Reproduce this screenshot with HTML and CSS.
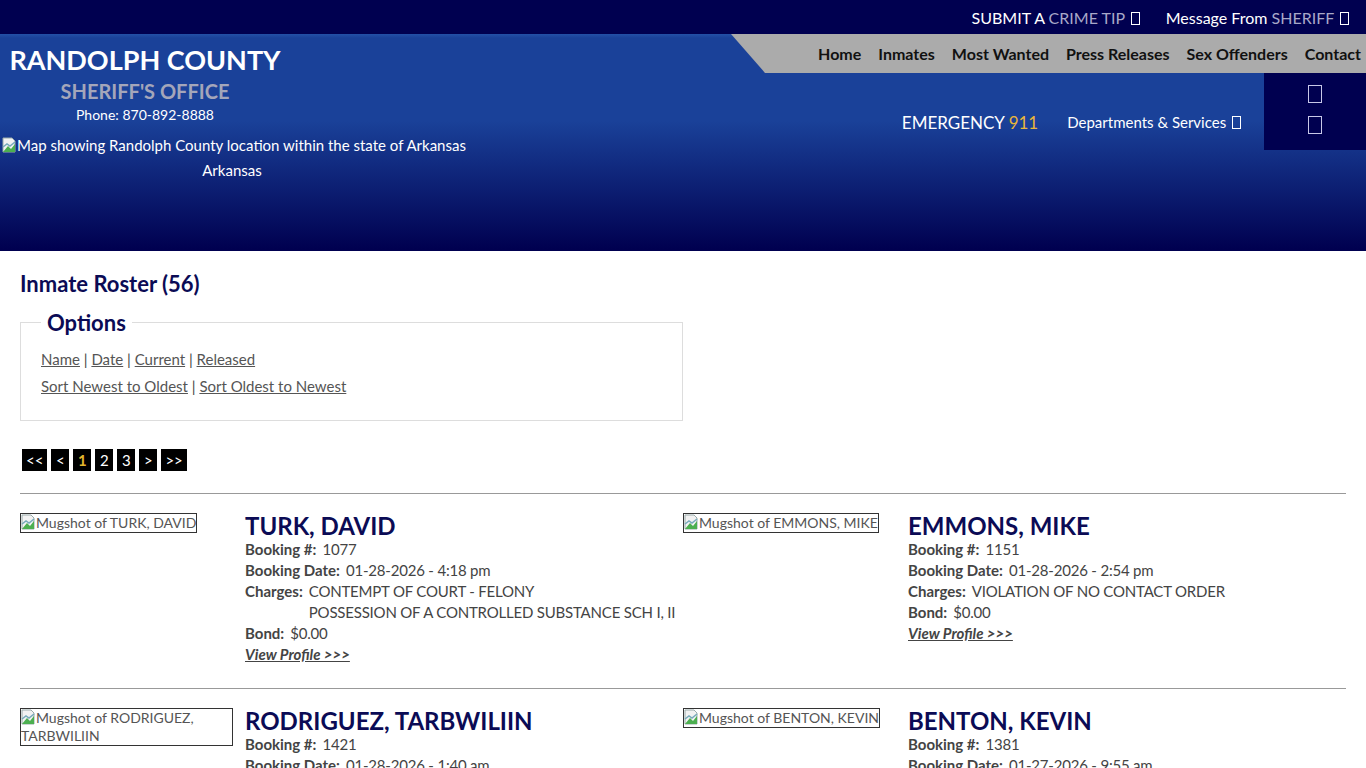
FILE: index.html
```html
<!DOCTYPE html>
<html lang="en">

<head>
    <meta charset="UTF-8" />
    <meta name="viewport" content="width=device-width, initial-scale=1.0" />
    <title>Inmate Roster - Randolph County Sheriff's Office</title>
    <link rel="stylesheet" href="styles.css">
</head>

<body>
    <header class="site-header">
        <div class="topbar">
            <a href="#">SUBMIT A <span class="dim">CRIME TIP</span> <i class="tofu"></i></a>
            <a href="#">Message From <span class="dim">SHERIFF</span> <i class="tofu"></i></a>
        </div>

        <div class="masthead">
            <div class="brand">
                <div class="brand-name">
                    <h1>RANDOLPH COUNTY</h1>
                    <h2>SHERIFF'S OFFICE</h2>
                    <p>Phone: 870-892-8888</p>
                </div>
                <div class="map">
                    <span class="broken-img">
                        <svg width="14" height="16" viewBox="0 0 14 16"><path d="M1 1h9l3 3v11H1z" fill="#f2f2f2" stroke="#9aa" stroke-width="1"/><path d="M1 15l5-6 3 3 4-5v8z" fill="#4caf50"/><path d="M1 10l4-3 3 2 5-4" fill="none" stroke="#7ab" stroke-width="1.5"/></svg>Map showing Randolph County location within the state of Arkansas
                    </span>
                    <div class="map-caption">Arkansas</div>
                </div>
            </div>

            <div class="nav-area">
                <nav class="main-nav">
                    <a href="#">Home</a>
                    <a href="#">Inmates</a>
                    <a href="#">Most Wanted</a>
                    <a href="#">Press Releases</a>
                    <a href="#">Sex Offenders</a>
                    <a href="#">Contact</a>
                </nav>
                <div class="sub-row">
                    <div class="emergency">EMERGENCY <span>911</span></div>
                    <a href="#" class="dept">Departments &amp; Services <i class="tofu"></i></a>
                    <div class="social-box">
                        <i class="tofu big"></i>
                        <i class="tofu big"></i>
                    </div>
                </div>
            </div>
        </div>
    </header>

    <main class="content">
        <h3 class="page-title">Inmate Roster (56)</h3>

        <fieldset class="options">
            <legend>Options</legend>
            <p><a href="#">Name</a> | <a href="#">Date</a> | <a href="#">Current</a> | <a href="#">Released</a></p>
            <p><a href="#">Sort Newest to Oldest</a> | <a href="#">Sort Oldest to Newest</a></p>
        </fieldset>

        <div class="pager">
            <a href="#">&lt;&lt;</a>
            <a href="#">&lt;</a>
            <a href="#" class="current">1</a>
            <a href="#">2</a>
            <a href="#">3</a>
            <a href="#">&gt;</a>
            <a href="#">&gt;&gt;</a>
        </div>

        <div class="roster-row">
            <div class="inmate">
                <div class="mug"><span class="broken-img boxed"><svg width="14" height="16" viewBox="0 0 14 16"><path d="M1 1h9l3 3v11H1z" fill="#f2f2f2" stroke="#9aa" stroke-width="1"/><path d="M1 15l5-6 3 3 4-5v8z" fill="#4caf50"/><path d="M1 10l4-3 3 2 5-4" fill="none" stroke="#7ab" stroke-width="1.5"/></svg>Mugshot of TURK, DAVID</span></div>
                <div class="info">
                    <h4>TURK, DAVID</h4>
                    <div class="field"><b>Booking #:</b><span>1077</span></div>
                    <div class="field"><b>Booking Date:</b><span>01-28-2026 - 4:18 pm</span></div>
                    <div class="field"><b>Charges:</b><span>CONTEMPT OF COURT - FELONY<br>POSSESSION OF A CONTROLLED SUBSTANCE SCH I, II</span></div>
                    <div class="field"><b>Bond:</b><span>$0.00</span></div>
                    <a href="#" class="profile">View Profile &gt;&gt;&gt;</a>
                </div>
            </div>
            <div class="inmate">
                <div class="mug"><span class="broken-img boxed"><svg width="14" height="16" viewBox="0 0 14 16"><path d="M1 1h9l3 3v11H1z" fill="#f2f2f2" stroke="#9aa" stroke-width="1"/><path d="M1 15l5-6 3 3 4-5v8z" fill="#4caf50"/><path d="M1 10l4-3 3 2 5-4" fill="none" stroke="#7ab" stroke-width="1.5"/></svg>Mugshot of EMMONS, MIKE</span></div>
                <div class="info">
                    <h4>EMMONS, MIKE</h4>
                    <div class="field"><b>Booking #:</b><span>1151</span></div>
                    <div class="field"><b>Booking Date:</b><span>01-28-2026 - 2:54 pm</span></div>
                    <div class="field"><b>Charges:</b><span>VIOLATION OF NO CONTACT ORDER</span></div>
                    <div class="field"><b>Bond:</b><span>$0.00</span></div>
                    <a href="#" class="profile">View Profile &gt;&gt;&gt;</a>
                </div>
            </div>
        </div>

        <div class="roster-row">
            <div class="inmate">
                <div class="mug"><span class="broken-img boxed"><svg width="14" height="16" viewBox="0 0 14 16"><path d="M1 1h9l3 3v11H1z" fill="#f2f2f2" stroke="#9aa" stroke-width="1"/><path d="M1 15l5-6 3 3 4-5v8z" fill="#4caf50"/><path d="M1 10l4-3 3 2 5-4" fill="none" stroke="#7ab" stroke-width="1.5"/></svg>Mugshot of RODRIGUEZ, TARBWILIIN</span></div>
                <div class="info">
                    <h4>RODRIGUEZ, TARBWILIIN</h4>
                    <div class="field"><b>Booking #:</b><span>1421</span></div>
                    <div class="field"><b>Booking Date:</b><span>01-28-2026 - 1:40 am</span></div>
                    <div class="field"><b>Charges:</b><span>FAILURE TO APPEAR</span></div>
                    <div class="field"><b>Bond:</b><span>$0.00</span></div>
                    <a href="#" class="profile">View Profile &gt;&gt;&gt;</a>
                </div>
            </div>
            <div class="inmate">
                <div class="mug"><span class="broken-img boxed"><svg width="14" height="16" viewBox="0 0 14 16"><path d="M1 1h9l3 3v11H1z" fill="#f2f2f2" stroke="#9aa" stroke-width="1"/><path d="M1 15l5-6 3 3 4-5v8z" fill="#4caf50"/><path d="M1 10l4-3 3 2 5-4" fill="none" stroke="#7ab" stroke-width="1.5"/></svg>Mugshot of BENTON, KEVIN</span></div>
                <div class="info">
                    <h4>BENTON, KEVIN</h4>
                    <div class="field"><b>Booking #:</b><span>1381</span></div>
                    <div class="field"><b>Booking Date:</b><span>01-27-2026 - 9:55 am</span></div>
                    <div class="field"><b>Charges:</b><span>FAILURE TO APPEAR</span></div>
                    <div class="field"><b>Bond:</b><span>$0.00</span></div>
                    <a href="#" class="profile">View Profile &gt;&gt;&gt;</a>
                </div>
            </div>
        </div>
    </main>
</body>

</html>
```

FILE: styles.css
```css
* {
    margin: 0;
    padding: 0;
    box-sizing: border-box;
}

body {
    font-family: "Lato", "Open Sans", sans-serif;
    font-size: 15px;
    color: #444;
    background: white;
}

a {
    color: inherit;
}

/* placeholder box for icon-font glyphs that did not load */
.tofu {
    display: inline-block;
    width: 9px;
    height: 13px;
    border: 1px solid currentColor;
    vertical-align: -1px;
    margin-left: 2px;
}

.tofu.big {
    width: 14px;
    height: 18px;
    border-color: #c8c8e8;
    margin: 0;
}

.broken-img {
    display: inline-block;
}

.broken-img svg {
    vertical-align: -2px;
    margin-right: 1px;
}

/* header */
.topbar {
    height: 34px;
    background: #000050;
    display: flex;
    justify-content: flex-end;
    align-items: center;
    gap: 26px;
    padding-right: 17px;
}

.topbar a {
    color: white;
    text-decoration: none;
    font-size: 16px;
}

.topbar .dim {
    color: #a8a8c8;
}

.masthead {
    height: 217px;
    display: flex;
    justify-content: space-between;
    background: linear-gradient(#2350a6 0, #1a4199 4px, #1a4199 40%, #000050 99%);
}

.brand {
    color: white;
    width: 470px;
    white-space: nowrap;
}

.brand-name {
    width: 290px;
    text-align: center;
    padding-top: 10px;
}

.brand-name h1 {
    font-size: 27px;
    line-height: 32px;
    font-weight: bold;
}

.brand-name h2 {
    font-size: 20px;
    line-height: 30px;
    color: #a4a6ba;
}

.brand-name p {
    font-size: 14px;
    line-height: 18px;
}

.map {
    width: 462px;
    padding-top: 12px;
    padding-left: 2px;
    font-size: 15px;
}

.map .broken-img {
    line-height: 18px;
}

.map-caption {
    text-align: center;
    margin-top: 7px;
}

.nav-area {
    width: 635px;
    display: flex;
    flex-direction: column;
}

.main-nav {
    height: 39px;
    background: #ababab;
    clip-path: polygon(0 0, 100% 0, 100% 100%, 34px 100%);
    display: flex;
    justify-content: flex-end;
    align-items: center;
    gap: 17px;
    padding-right: 5px;
}

.main-nav a {
    color: #111;
    text-decoration: none;
    font-weight: bold;
    font-size: 16px;
}

.sub-row {
    display: flex;
    justify-content: flex-end;
    align-items: flex-start;
}

.emergency {
    color: white;
    font-size: 17px;
    margin-top: 39px;
    margin-right: 29px;
}

.emergency span {
    color: #e9b63a;
}

.dept {
    color: white;
    text-decoration: none;
    font-size: 15px;
    margin-top: 40px;
    margin-right: 23px;
}

.social-box {
    width: 102px;
    height: 77px;
    background: #000050;
    display: flex;
    flex-direction: column;
    align-items: center;
    gap: 13px;
    padding-top: 12px;
}

/* content */
.content {
    padding: 20px 20px 40px;
}

.page-title {
    color: #0b0b55;
    font-size: 22px;
    line-height: 26px;
    margin-bottom: 12px;
}

.options {
    width: 663px;
    border: 1px solid #ddd;
    padding: 10px 20px 20px;
}

.options legend {
    color: #0b0b55;
    font-size: 22px;
    font-weight: bold;
    padding: 0 6px;
}

.options p {
    line-height: 27px;
}

.options a {
    color: #555;
}

.pager {
    display: flex;
    gap: 4px;
    margin: 28px 2px 22px;
}

.pager a {
    background: black;
    color: white;
    text-decoration: none;
    height: 22px;
    min-width: 18px;
    padding: 0 4px;
    text-align: center;
    line-height: 22px;
    font-size: 15px;
}

.pager a.current {
    color: #e3b52d;
    font-weight: bold;
}

.roster-row {
    border-top: 1px solid #999;
    display: grid;
    grid-template-columns: 1fr 1fr;
    padding: 19px 0 23px;
}

.inmate {
    display: flex;
}

.mug {
    width: 225px;
    flex: none;
}

.mug .boxed {
    border: 1px solid #333;
    max-width: 213px;
    font-size: 14px;
    line-height: 18px;
    color: #555;
}

.info h4 {
    color: #0b0b55;
    font-size: 24px;
    line-height: 26px;
}

.field {
    display: flex;
    line-height: 21px;
}

.field b {
    margin-right: 6px;
    flex: none;
}

.field span {
    white-space: nowrap;
    letter-spacing: -0.2px;
}

.profile {
    font-weight: bold;
    font-style: italic;
    line-height: 21px;
}
```
